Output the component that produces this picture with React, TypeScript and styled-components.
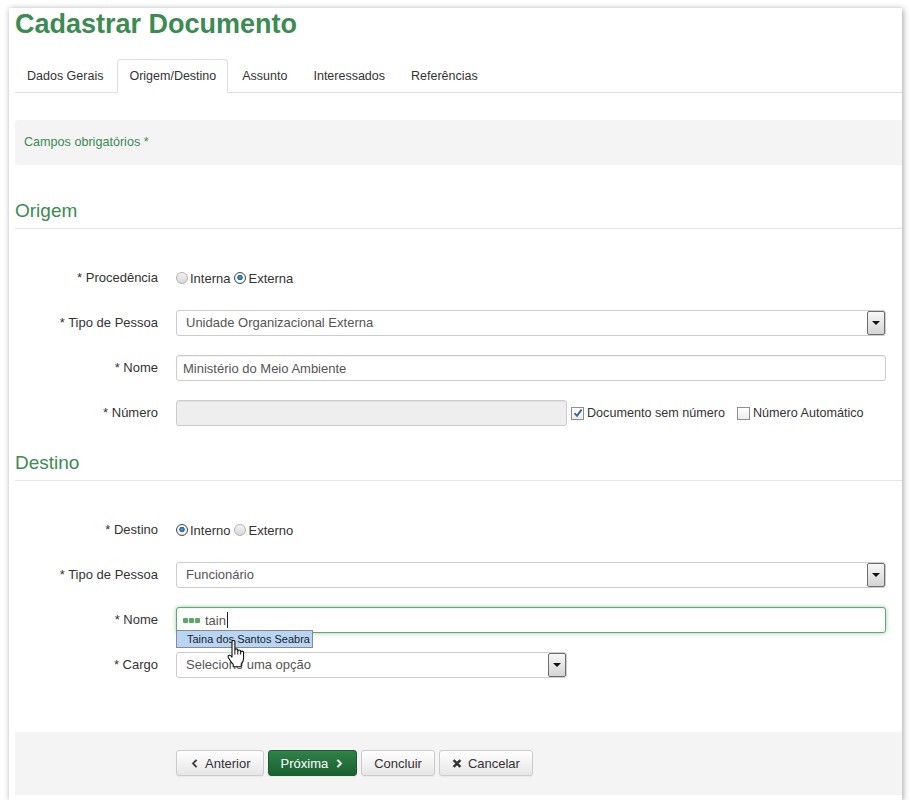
import React from "react";
import styled, { createGlobalStyle } from "styled-components";
import { FaChevronLeft, FaChevronRight, FaTimes } from "react-icons/fa";

const GlobalStyle = createGlobalStyle`
  html, body { margin: 0; padding: 0; background: #ffffff; }
  body { font-family: "Liberation Sans", Arial, sans-serif; font-size: 13px; color: #333; }
  * { box-sizing: border-box; }
`;

const GREEN = "#3b8b52";

const Page = styled.div`
  padding: 8px 0 0 9px;
`;

const Panel = styled.div`
  width: 893px;
  height: 792px;
  background: #fff;
  box-shadow: 1px 1px 6px rgba(0, 0, 0, 0.38);
  padding: 1px 0 5px 6px;
  display: flex;
  flex-direction: column;
`;

const Title = styled.h1`
  margin: 0;
  font-size: 27px;
  line-height: 30px;
  font-weight: bold;
  color: ${GREEN};
`;

const Tabs = styled.div`
  margin-top: 20px;
  display: flex;
  height: 34px;
  border-bottom: 1px solid #dddddd;
`;

const Tab = styled.div<{ $active?: boolean }>`
  height: 34px;
  padding: 0 11px;
  margin-right: 2px;
  line-height: 32px;
  font-size: 12.5px;
  color: #333;
  border: 1px solid ${(p) => (p.$active ? "#dddddd" : "transparent")};
  border-bottom-color: ${(p) => (p.$active ? "#ffffff" : "transparent")};
  border-radius: 4px 4px 0 0;
  background: ${(p) => (p.$active ? "#ffffff" : "transparent")};
`;

const InfoBox = styled.div`
  margin-top: 27px;
  height: 45px;
  background: #f4f4f4;
  border-radius: 3px 0 0 3px;
  padding-left: 9px;
  line-height: 45px;
  font-size: 12.6px;
  color: ${GREEN};
`;

const SectionHeading = styled.h2<{ $top: number }>`
  margin: ${(p) => p.$top}px 0 0 0;
  font-size: 19px;
  line-height: 20px;
  font-weight: normal;
  color: ${GREEN};
  padding-bottom: 7px;
  border-bottom: 1px solid #e5e5e5;
`;

const Form = styled.div`
  margin-top: 36px;
  display: grid;
  grid-template-columns: 143px 1fr;
  column-gap: 18px;
  row-gap: 19px;
  padding-right: 16px;
`;

const Label = styled.div`
  height: 26px;
  line-height: 26px;
  text-align: right;
  font-size: 13px;
  color: #333;
  white-space: nowrap;
`;

const Control = styled.div`
  position: relative;
  height: 26px;
  display: flex;
  align-items: center;
`;

const RadioGroup = styled.div`
  display: flex;
  align-items: center;
  font-size: 13px;
  color: #333;
`;

const RadioDot = styled.span<{ $checked?: boolean }>`
  width: 12px;
  height: 12px;
  border-radius: 50%;
  border: 1px solid ${(p) => (p.$checked ? "#3f4a55" : "#b3b3b3")};
  background: ${(p) =>
    p.$checked
      ? "radial-gradient(circle at 50% 45%, #5aa7e8 0, #1c5d9e 2.4px, #ffffff 3px, #e6e6e6 6px)"
      : "linear-gradient(#f4f4f4, #d6d6d6)"};
  margin-right: 2px;
  flex: none;
`;

const RadioText = styled.span`
  margin-right: 4px;
`;

const Input = styled.div<{ $focus?: boolean; $disabled?: boolean; $width?: number }>`
  height: 26px;
  ${(p) => (p.$width ? `width: ${p.$width}px; flex: none;` : "flex: 1;")}
  border: 1px solid ${(p) => (p.$focus ? "#62a872" : "#cccccc")};
  border-radius: 3px;
  background: ${(p) => (p.$disabled ? "#eeeeee" : "#ffffff")};
  box-shadow: ${(p) =>
    p.$focus ? "0 0 4px rgba(98, 168, 114, 0.6), inset 0 1px 1px rgba(0,0,0,0.05)" : "inset 0 1px 1px rgba(0,0,0,0.06)"};
  padding-left: 6px;
  display: flex;
  align-items: center;
  font-size: 13px;
  color: #555;
`;

const SelectBox = styled.div<{ $width?: number }>`
  height: 26px;
  ${(p) => (p.$width ? `width: ${p.$width}px; flex: none;` : "flex: 1;")}
  border: 1px solid #cccccc;
  border-radius: 3px;
  background: #fff;
  display: flex;
  align-items: stretch;
  font-size: 13px;
  color: #555;
`;

const SelectText = styled.div`
  flex: 1;
  padding-left: 9px;
  line-height: 24px;
`;

const SelectArrow = styled.div`
  width: 18px;
  border: 1px solid #6d6d6d;
  border-radius: 2px;
  background: linear-gradient(#f7f7f7, #d4d4d4);
  display: flex;
  align-items: center;
  justify-content: center;
`;

const Triangle = styled.span`
  width: 0;
  height: 0;
  border-left: 4px solid transparent;
  border-right: 4px solid transparent;
  border-top: 4px solid #111;
`;

const CheckLabel = styled.div<{ $gap: number }>`
  display: flex;
  align-items: center;
  margin-left: ${(p) => p.$gap}px;
  font-size: 12.6px;
  color: #333;
  white-space: nowrap;
`;

const CheckBox = styled.span`
  width: 13px;
  height: 13px;
  border: 1px solid #8f8f8f;
  background: linear-gradient(#ffffff, #ececec);
  margin-right: 3px;
  display: flex;
  align-items: center;
  justify-content: center;
  flex: none;
`;

const Dots = styled.span`
  display: flex;
  gap: 1px;
  margin-right: 5px;
`;

const Dot = styled.span`
  width: 5px;
  height: 5px;
  border-radius: 1px;
  background: #5aa865;
`;

const Caret = styled.span`
  display: inline-block;
  width: 1px;
  height: 16px;
  background: #222;
  margin-left: 1px;
`;

const Suggestion = styled.div`
  position: absolute;
  left: 0;
  top: 23px;
  z-index: 3;
  width: 137px;
  height: 18px;
  border: 1px solid #8a8a8a;
  background: #b9d5f6;
  font-size: 11px;
  line-height: 16px;
  color: #222;
  padding-left: 10px;
  white-space: nowrap;
`;

const HandCursor = styled.svg`
  position: absolute;
  left: 51px;
  top: 33px;
  z-index: 4;
`;

const Footer = styled.div`
  margin-top: auto;
  height: 63px;
  background: #f4f4f4;
  padding: 18px 0 0 161px;
  display: flex;
  gap: 3px;
  align-items: flex-start;
`;

const Button = styled.div<{ $primary?: boolean }>`
  height: 26px;
  padding: 0 12px;
  border: 1px solid ${(p) => (p.$primary ? "#1d5c30" : "#cccccc")};
  border-radius: 3px;
  background: ${(p) =>
    p.$primary ? "linear-gradient(#2f8248, #1a6030)" : "linear-gradient(#ffffff, #e6e6e6)"};
  color: ${(p) => (p.$primary ? "#ffffff" : "#333333")};
  font-size: 13px;
  display: flex;
  align-items: center;
  gap: 6px;
  margin-right: 1px;
  box-shadow: 0 1px 1px rgba(0,0,0,0.05);
`;

const BtnIcon = styled.span`
  width: 10px;
  display: flex;
  align-items: center;
  justify-content: center;
  svg { stroke: currentColor; stroke-width: 30px; }
`;

function Radio({ checked, label }: { checked?: boolean; label: string }) {
  return (
    <>
      <RadioDot $checked={checked} />
      <RadioText>{label}</RadioText>
    </>
  );
}

function Select({ value, width }: { value: string; width?: number }) {
  return (
    <SelectBox $width={width}>
      <SelectText>{value}</SelectText>
      <SelectArrow>
        <Triangle />
      </SelectArrow>
    </SelectBox>
  );
}

function Check({ checked, label, gap }: { checked?: boolean; label: string; gap: number }) {
  return (
    <CheckLabel $gap={gap}>
      <CheckBox>
        {checked && (
          <svg width="10" height="10" viewBox="0 0 10 10">
            <path d="M1.5 5.2 L4 7.8 L8.6 1.6" fill="none" stroke="#3b5ea6" strokeWidth="1.8" />
          </svg>
        )}
      </CheckBox>
      {label}
    </CheckLabel>
  );
}

export default function App() {
  return (
    <>
      <GlobalStyle />
      <Page>
        <Panel>
          <Title>Cadastrar Documento</Title>
          <Tabs>
            <Tab>Dados Gerais</Tab>
            <Tab $active>Origem/Destino</Tab>
            <Tab>Assunto</Tab>
            <Tab>Interessados</Tab>
            <Tab>Referências</Tab>
          </Tabs>
          <InfoBox>Campos obrigatórios *</InfoBox>

          <SectionHeading $top={36}>Origem</SectionHeading>
          <Form>
            <Label>* Procedência</Label>
            <Control>
              <RadioGroup>
                <Radio label="Interna" />
                <Radio checked label="Externa" />
              </RadioGroup>
            </Control>
            <Label>* Tipo de Pessoa</Label>
            <Control>
              <Select value="Unidade Organizacional Externa" />
            </Control>
            <Label>* Nome</Label>
            <Control>
              <Input>Ministério do Meio Ambiente</Input>
            </Control>
            <Label>* Número</Label>
            <Control>
              <Input $disabled $width={391} />
              <Check checked gap={4} label="Documento sem número" />
              <Check gap={12} label="Número Automático" />
            </Control>
          </Form>

          <SectionHeading $top={27}>Destino</SectionHeading>
          <Form>
            <Label>* Destino</Label>
            <Control>
              <RadioGroup>
                <Radio checked label="Interno" />
                <Radio label="Externo" />
              </RadioGroup>
            </Control>
            <Label>* Tipo de Pessoa</Label>
            <Control>
              <Select value="Funcionário" />
            </Control>
            <Label>* Nome</Label>
            <Control>
              <Input $focus>
                <Dots>
                  <Dot />
                  <Dot />
                  <Dot />
                </Dots>
                tain
                <Caret />
              </Input>
              <Suggestion>Taina dos Santos Seabra</Suggestion>
              <HandCursor width="20" height="28" viewBox="0 0 18 25">
                <path
                  d="M4.5 1.5 C4.5 0.7 5.1 0.3 5.8 0.3 C6.5 0.3 7.1 0.7 7.1 1.5 V9 C7.1 8.3 7.7 7.9 8.4 7.9 C9.1 7.9 9.7 8.3 9.7 9 V10 C9.7 9.3 10.3 8.9 11 8.9 C11.7 8.9 12.3 9.3 12.3 10 V11 C12.3 10.3 12.9 9.9 13.6 9.9 C14.3 9.9 14.9 10.3 14.9 11 V16.5 C14.9 18.8 13.8 20.5 12.8 21.5 V24 H5.6 V21.8 C4.5 20.7 2.6 18.2 1.3 15.8 C0.7 14.6 1.3 13.4 2.5 13.6 C3.3 13.8 3.9 14.5 4.5 15.3 Z"
                  fill="#ffffff"
                  stroke="#111"
                  strokeWidth="1"
                  strokeLinejoin="round"
                />
                <path d="M7.1 9 V13 M9.7 10 V13 M12.3 11 V13" stroke="#111" strokeWidth="0.9" fill="none" />
              </HandCursor>
            </Control>
            <Label>* Cargo</Label>
            <Control>
              <Select value="Selecione uma opção" width={391} />
            </Control>
          </Form>

          <Footer>
            <Button>
              <BtnIcon>
                <FaChevronLeft size={9} />
              </BtnIcon>
              Anterior
            </Button>
            <Button $primary>
              Próxima
              <BtnIcon>
                <FaChevronRight size={9} />
              </BtnIcon>
            </Button>
            <Button>Concluir</Button>
            <Button>
              <BtnIcon>
                <FaTimes size={11} />
              </BtnIcon>
              Cancelar
            </Button>
          </Footer>
        </Panel>
      </Page>
    </>
  );
}
